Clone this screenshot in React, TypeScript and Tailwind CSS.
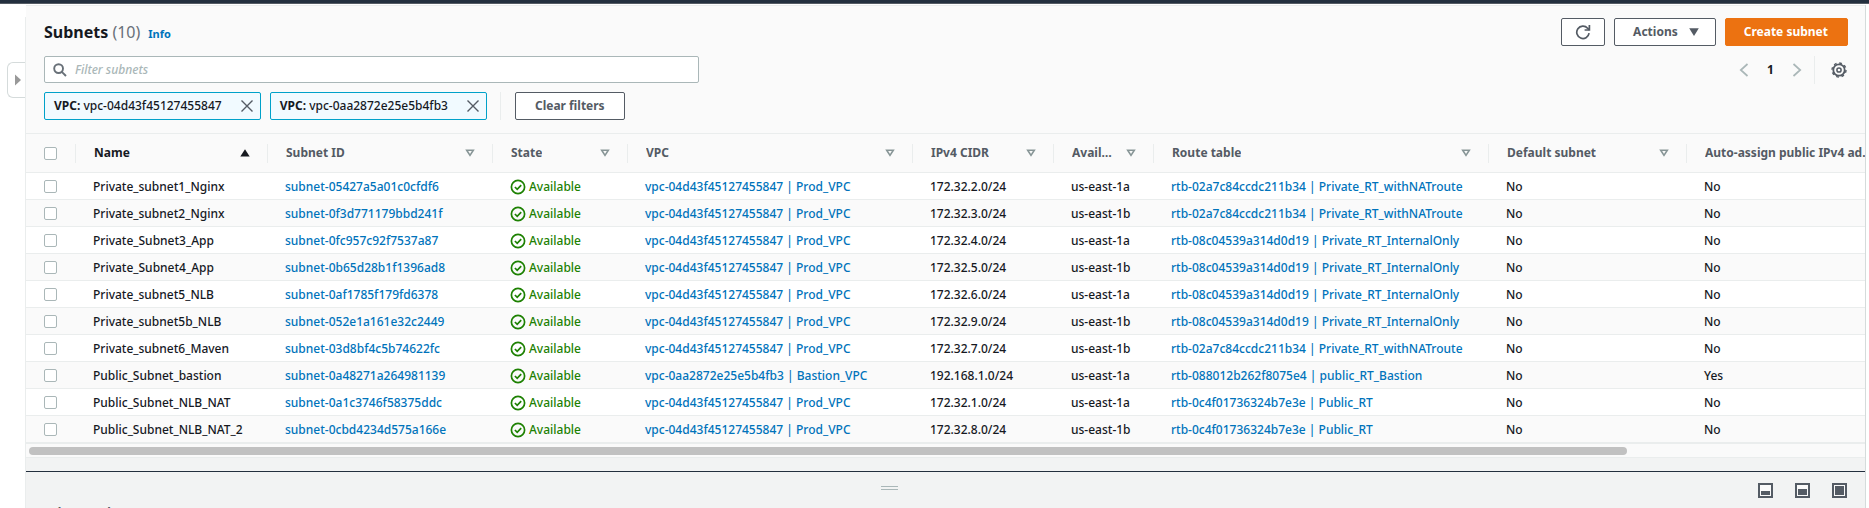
import React from "react";

const columns = [
  { title: "Name", width: 192, sorted: true },
  { title: "Subnet ID", width: 225 },
  { title: "State", width: 135 },
  { title: "VPC", width: 285 },
  { title: "IPv4 CIDR", width: 141 },
  { title: "Availability Zone", width: 100 },
  { title: "Route table", width: 335 },
  { title: "Default subnet", width: 198 },
  { title: "Auto-assign public IPv4 address", width: 226 },
  { title: "", width: 225 },
];

const PROD = "vpc-04d43f45127455847 | Prod_VPC";
const BASTION = "vpc-0aa2872e25e5b4fb3 | Bastion_VPC";
const RT_NAT = "rtb-02a7c84ccdc211b34 | Private_RT_withNATroute";
const RT_INTERNAL = "rtb-08c04539a314d0d19 | Private_RT_InternalOnly";
const RT_BASTION = "rtb-088012b262f8075e4 | public_RT_Bastion";
const RT_PUBLIC = "rtb-0c4f01736324b7e3e | Public_RT";

const subnets = [
  ["Private_subnet1_Nginx", "subnet-05427a5a01c0cfdf6", PROD, "172.32.2.0/24", "us-east-1a", RT_NAT, "No"],
  ["Private_subnet2_Nginx", "subnet-0f3d771179bbd241f", PROD, "172.32.3.0/24", "us-east-1b", RT_NAT, "No"],
  ["Private_Subnet3_App", "subnet-0fc957c92f7537a87", PROD, "172.32.4.0/24", "us-east-1a", RT_INTERNAL, "No"],
  ["Private_Subnet4_App", "subnet-0b65d28b1f1396ad8", PROD, "172.32.5.0/24", "us-east-1b", RT_INTERNAL, "No"],
  ["Private_subnet5_NLB", "subnet-0af1785f179fd6378", PROD, "172.32.6.0/24", "us-east-1a", RT_INTERNAL, "No"],
  ["Private_subnet5b_NLB", "subnet-052e1a161e32c2449", PROD, "172.32.9.0/24", "us-east-1b", RT_INTERNAL, "No"],
  ["Private_subnet6_Maven", "subnet-03d8bf4c5b74622fc", PROD, "172.32.7.0/24", "us-east-1b", RT_NAT, "No"],
  ["Public_Subnet_bastion", "subnet-0a48271a264981139", BASTION, "192.168.1.0/24", "us-east-1a", RT_BASTION, "Yes"],
  ["Public_Subnet_NLB_NAT", "subnet-0a1c3746f58375ddc", PROD, "172.32.1.0/24", "us-east-1a", RT_PUBLIC, "No"],
  ["Public_Subnet_NLB_NAT_2", "subnet-0cbd4234d575a166e", PROD, "172.32.8.0/24", "us-east-1b", RT_PUBLIC, "No"],
];

function Checkbox({ label }: { label: string }) {
  return (
    <input
      type="checkbox"
      aria-label={label}
      className="block size-[13px] appearance-none rounded-xs border border-[#aab7b8] bg-white checked:bg-[#0073bb]"
    />
  );
}

function SortIcon({ sorted }: { sorted?: boolean }) {
  return sorted ? (
    <svg viewBox="0 0 10 8" className="h-2 w-[10px] shrink-0" aria-hidden="true">
      <path d="M5 0.2 9.7 7.4H0.3z" fill="#16191f" />
    </svg>
  ) : (
    <svg viewBox="0 0 10 8" className="h-2 w-[10px] shrink-0" aria-hidden="true">
      <path d="M1.7 1.3h6.6L5 6.4z" fill="none" stroke="#879596" strokeWidth="1.6" />
    </svg>
  );
}

function StatusIcon() {
  return (
    <svg viewBox="0 0 16 16" className="size-4 shrink-0" fill="none" stroke="#1d8102" strokeWidth="1.7" aria-hidden="true">
      <circle cx="8" cy="8" r="6.6" />
      <path d="m4.9 8 2.3 2.3 4-4.1" />
    </svg>
  );
}

function Token({ value }: { value: string }) {
  return (
    <div className="flex h-7 items-center gap-[17px] rounded-xs border border-[#00a1c9] bg-[#f1faff] pr-[5px] pl-[9px]">
      <span>
        <b>VPC:</b> {value}
      </span>
      <button type="button" aria-label={`Remove filter ${value}`} className="flex size-4 items-center justify-center">
        <svg viewBox="0 0 14 14" className="size-[14px]" stroke="#545b64" strokeWidth="1.4" aria-hidden="true">
          <path d="m1.5 1.5 11 11m0-11-11 11" />
        </svg>
      </button>
    </div>
  );
}

function PanelIcon({ top }: { top: number }) {
  return (
    <svg viewBox="0 0 15 15" className="block size-[15px]" aria-hidden="true">
      <rect x="1" y="1" width="13" height="13" fill="#fafafa" stroke="#545b64" strokeWidth="2" />
      <rect x="3" y={top} width="9" height={12 - top} fill="#545b64" />
    </svg>
  );
}

const buttonBase = "flex h-7 items-center rounded-xs border font-bold";

export default function App() {
  return (
    <div className="flex h-screen flex-col overflow-hidden bg-white font-['Noto_Sans','Open_Sans',sans-serif] text-xs font-medium text-[#16191f]">
      <div className="h-1 shrink-0 border-b border-[#545b64] bg-[#232f3e]" />
      <div className="flex min-h-0 flex-1 pr-[3px]">
        <aside className="mt-[13px] flex w-[26px] shrink-0 items-start justify-end border-r border-[#eaeded] pt-[45px]">
          <button
            type="button"
            aria-label="Open navigation"
            className="flex h-9 w-[18px] items-center justify-center rounded-l-md border border-r-0 border-[#d5dbdb] bg-white pl-[3px]"
          >
            <svg viewBox="0 0 6 12" className="h-3 w-[6px]" aria-hidden="true">
              <path d="M0 0.5 6 6 0 11.5z" fill="#999" />
            </svg>
          </button>
        </aside>

        <main className="mt-px flex min-w-0 flex-1 flex-col border-r border-[#d5dbdb] bg-[#f2f3f3]">
          <section className="border-y border-[#eaeded] bg-[#fafafa]">
            <div className="pt-3 pr-[17px] pb-[13px] pl-[18px]">
              <div className="flex items-center justify-between">
                <div className="flex items-baseline gap-2">
                  <h1 className="text-base leading-7 font-bold">
                    Subnets <span className="font-normal text-[#687078]">(10)</span>
                  </h1>
                  <a href="#info" className="text-[11px] font-bold text-[#0073bb]">
                    Info
                  </a>
                </div>
                <div className="flex gap-[9px]">
                  <button type="button" aria-label="Refresh" className={`${buttonBase} border-[#545b64] bg-white px-[13px]`}>
                    <svg viewBox="0 0 16 16" className="size-4" fill="none" stroke="#545b64" strokeWidth="1.7" aria-hidden="true">
                      <path d="M14.1 9.2A6.2 6.2 0 1 1 12.6 4.2L14.2 5.8" />
                      <path d="M14.4 1v5H9.6" />
                    </svg>
                  </button>
                  <button type="button" className={`${buttonBase} gap-[11px] border-[#545b64] bg-white pr-4 pl-[18px] text-[#545b64]`}>
                    Actions
                    <svg viewBox="0 0 10 8" className="h-2 w-[10px]" aria-hidden="true">
                      <path d="M0.2 0.3h9.6L5 8z" fill="#545b64" />
                    </svg>
                  </button>
                  <button type="button" className={`${buttonBase} border-[#ec7211] bg-[#ec7211] pr-[19px] pl-[18px] text-white`}>
                    Create subnet
                  </button>
                </div>
              </div>

              <div className="mt-[10px] flex items-start justify-between">
                <label className="flex h-[27px] w-[655px] items-center gap-2 rounded-xs border border-[#aab7b8] bg-white px-2">
                  <svg viewBox="0 0 14 14" className="size-[14px]" fill="none" stroke="#687078" strokeWidth="1.9" aria-hidden="true">
                    <circle cx="5.6" cy="5.6" r="4.4" />
                    <path d="m8.8 8.8 4.2 4.2" />
                  </svg>
                  <input
                    type="text"
                    aria-label="Filter subnets"
                    placeholder="Filter subnets"
                    className="flex-1 outline-none placeholder:text-[#aab7b8] placeholder:italic"
                  />
                </label>
                <div className="flex h-7 items-center">
                  <button type="button" aria-label="Previous page">
                    <svg viewBox="0 0 10 14" className="h-[14px] w-[10px]" fill="none" stroke="#aab7b8" strokeWidth="1.7" aria-hidden="true">
                      <path d="M8.5 1 1.8 7l6.7 6" />
                    </svg>
                  </button>
                  <button type="button" aria-current="page" className="w-[43px] font-bold">
                    1
                  </button>
                  <button type="button" aria-label="Next page">
                    <svg viewBox="0 0 10 14" className="h-[14px] w-[10px]" fill="none" stroke="#aab7b8" strokeWidth="1.7" aria-hidden="true">
                      <path d="m1.5 1 6.7 6-6.7 6" />
                    </svg>
                  </button>
                  <div className="ml-3 h-7 w-px bg-[#eaeded]" />
                  <button type="button" aria-label="Preferences" className="mr-px ml-4">
                    <svg viewBox="0 0 16 16" className="size-4" fill="none" stroke="#545b64" aria-hidden="true">
                      <circle cx="8" cy="8" r="5.7" strokeWidth="1.8" />
                      <circle cx="8" cy="8" r="7" strokeWidth="1.4" strokeDasharray="2.75 2.75" />
                      <circle cx="8" cy="8" r="2.1" strokeWidth="1.5" />
                    </svg>
                  </button>
                </div>
              </div>

              <div className="mt-2 flex items-center gap-[9px]">
                <Token value="vpc-04d43f45127455847" />
                <Token value="vpc-0aa2872e25e5b4fb3" />
                <div className="ml-1 h-7 w-px bg-[#eaeded]" />
                <button type="button" className={`${buttonBase} ml-[5px] border-[#545b64] bg-white px-[19px] text-[#545b64]`}>
                  Clear filters
                </button>
              </div>
            </div>

            <div className="overflow-hidden border-y border-[#eaeded]">
              <table className="w-[2112px] table-fixed border-separate border-spacing-0 text-left whitespace-nowrap">
                <colgroup>
                  <col style={{ width: 50 }} />
                  {columns.map((c, i) => (
                    <col key={i} style={{ width: c.width }} />
                  ))}
                </colgroup>
                <thead>
                  <tr className="text-[#545b64] [&>th]:h-[39px] [&>th]:border-b [&>th]:border-[#eaeded]">
                    <th className="p-0 pl-[18px]">
                      <div className="flex h-[19px] items-center border-r border-[#eaeded]">
                        <Checkbox label="Select all subnets" />
                      </div>
                    </th>
                    {columns.map((c, i) => (
                      <th key={i} className="p-0 pl-[18px]">
                        <div
                          className={
                            c.sorted
                              ? "flex h-[19px] items-center justify-between gap-3 border-r border-[#eaeded] pr-[17px] text-[#16191f]"
                              : "flex h-[19px] items-center justify-between gap-3 border-r border-[#eaeded] pr-[17px]"
                          }
                        >
                          <span className="truncate">{c.title}</span>
                          {c.title && <SortIcon sorted={c.sorted} />}
                        </div>
                      </th>
                    ))}
                  </tr>
                </thead>
                <tbody>
                  {subnets.map(([name, id, vpc, cidr, zone, route, auto]) => (
                    <tr key={id} className="bg-white even:bg-[#fafafa] [&>td]:h-[27px] [&>td]:border-b [&>td]:border-[#eaeded]">
                      <td className="p-0 pl-[18px]">
                        <Checkbox label={`Select ${name}`} />
                      </td>
                      <td className="p-0 pt-0.5 pl-[17px]">{name}</td>
                      <td className="p-0 pt-0.5 pl-[17px]">
                        <a href={`#${id}`} className="text-[#0073bb]">{id}</a>
                      </td>
                      <td className="p-0 pt-0.5 pl-[17px]">
                        <span className="flex items-center gap-[3px] text-[#1d8102]">
                          <StatusIcon />
                          Available
                        </span>
                      </td>
                      <td className="p-0 pt-0.5 pl-[17px]">
                        <a href="#vpc" className="text-[#0073bb]">{vpc}</a>
                      </td>
                      <td className="p-0 pt-0.5 pl-[17px]">{cidr}</td>
                      <td className="p-0 pt-0.5 pl-[17px]">{zone}</td>
                      <td className="p-0 pt-0.5 pl-[17px]">
                        <a href="#route-table" className="text-[#0073bb]">{route}</a>
                      </td>
                      <td className="p-0 pt-0.5 pl-[17px]">No</td>
                      <td className="p-0 pt-0.5 pl-[17px]">{auto}</td>
                      <td className="p-0" />
                    </tr>
                  ))}
                </tbody>
              </table>
            </div>
            <div className="px-[3px] pt-[3px] pb-[2px]">
              <div className="h-2 w-[87.2%] rounded-full bg-[#c1c1c1]" />
            </div>
          </section>

          <section className="mt-[13px] flex-1 border-t border-[#232f3e]">
            <div className="flex items-start pt-[11px] pr-[18px]">
              <div className="flex flex-1 justify-center pt-[3px] pr-[6px]">
                <div className="h-1 w-[17px] border-y border-[#aab7b8]" />
              </div>
              <div className="flex gap-[22px]">
                <button type="button" aria-label="Small panel"><PanelIcon top={8} /></button>
                <button type="button" aria-label="Medium panel"><PanelIcon top={6} /></button>
                <button type="button" aria-label="Full panel"><PanelIcon top={3} /></button>
              </div>
            </div>
            <h2 className="px-[18px] pt-[7px] font-bold text-[#545b64]">Select a subnet</h2>
          </section>
        </main>
      </div>
    </div>
  );
}
